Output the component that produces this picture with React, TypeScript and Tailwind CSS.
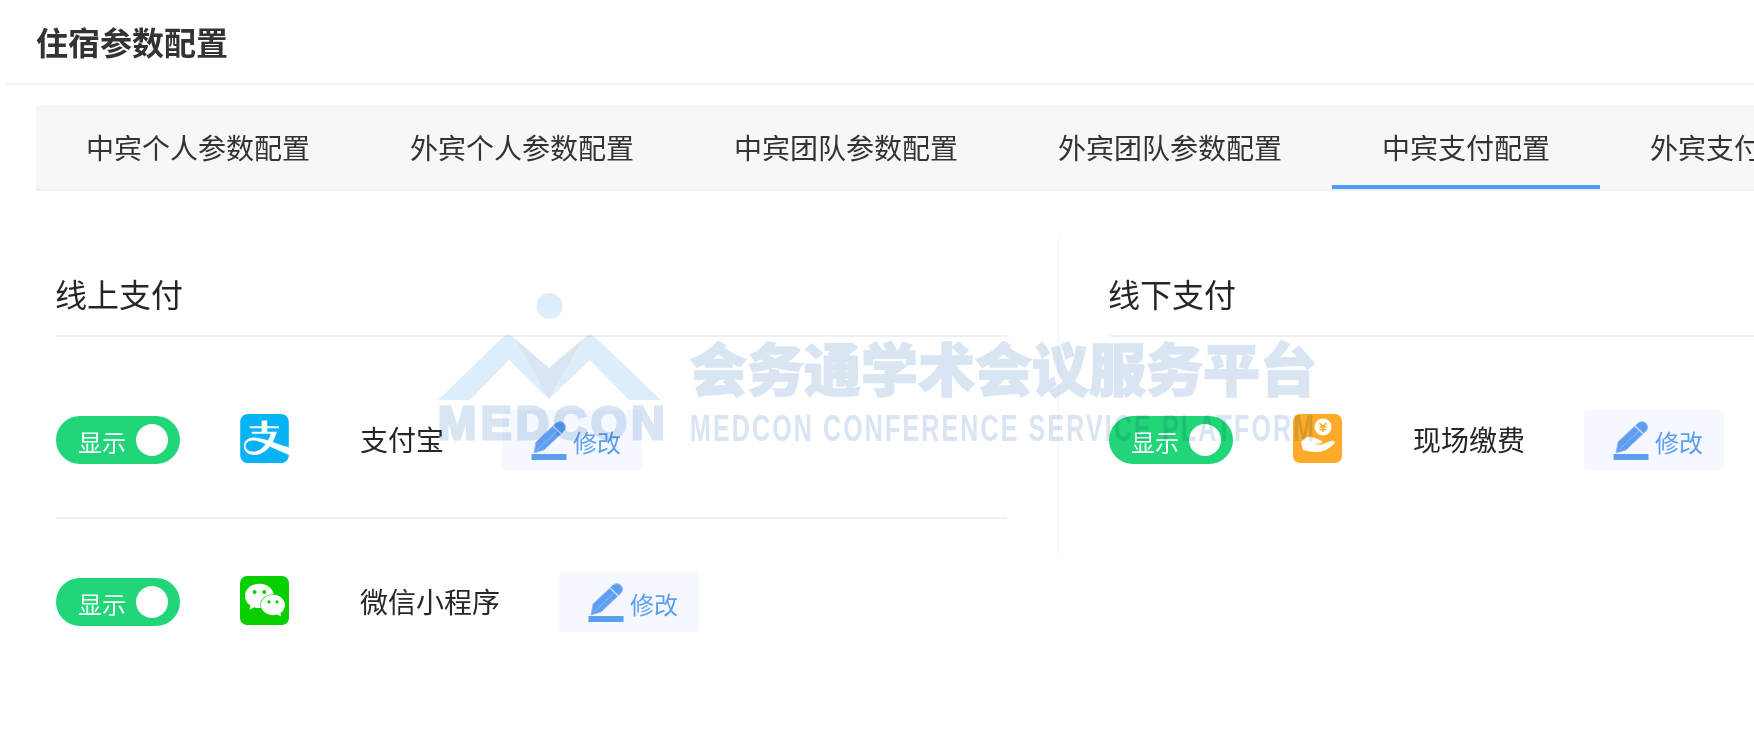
import React from 'react';
import { SiAlipay, SiWechat } from 'react-icons/si';

const cjk = 'font-["Microsoft_YaHei","Noto_Sans_CJK_SC",sans-serif]';

const tabs = ['中宾个人参数配置', '外宾个人参数配置', '中宾团队参数配置', '外宾团队参数配置', '中宾支付配置', '外宾支付配置'];

const Toggle = () => (
    <div className="flex items-center w-[124px] h-[48px] rounded-full bg-[#20d679] pl-[22px] shrink-0">
        <span className="text-[24px] leading-[48px] text-white w-[58px] pt-[3px]">显示</span>
        <span className="w-[32px] h-[32px] rounded-full bg-white" />
    </div>
);

const PencilIcon = () => (
    <svg width="36" height="40" viewBox="0 0 36 40" className="shrink-0">
        <path d="M3 33 L5 22 L24 4 C27 1 31 1 33 3.5 C35.5 6 35 9.5 32 12 L13 30 Z" fill="#5c9ff0" stroke="#a9b8f5" strokeWidth="1" />
        <path d="M22 6 L30.5 14" stroke="#c9dcfa" strokeWidth="1.5" />
        <path d="M6 30 L26 11" stroke="#8fbcf5" strokeWidth="1" />
        <rect x="0.5" y="34" width="35" height="6" fill="#5c9ff0" />
    </svg>
);

const EditButton = ({ className }: { className: string }) => (
    <button className={`flex items-center w-[140px] h-[60px] pl-[29px] rounded-[4px] bg-[#f5f9ff] shrink-0 ${className}`}>
        <PencilIcon />
        <span className="text-[24px] text-[#5c9ff0] ml-[6px] pt-[3px]">修改</span>
    </button>
);

const HandIcon = () => (
    <div className="w-[49px] h-[49px] ml-[60px] rounded-[7px] bg-[#ffaa2a] shrink-0 flex items-center justify-center relative -top-[2px]">
        <svg width="49" height="49" viewBox="0 0 49 49">
            <circle cx="30" cy="13" r="8.5" fill="#fff" />
            <path d="M26.5 9 L30 12.5 L33.5 9 M30 12.5 V18 M26.5 13 H33.5 M26.5 15.5 H33.5" stroke="#ffaa2a" strokeWidth="1.6" fill="none" />
            <path d="M8 28 C11 24 15 22 19 23 L27 26 C30 27 29 30 26 29.5 L21 29 L27 31 L38 27 C41 26 43 28 41 30 C36 35 30 38 24 38 C19 38 14 37 10 36 Z" fill="#fff" />
        </svg>
    </div>
);

const PayRow = ({ icon, name, editClass }: { icon: React.ReactNode; name: string; editClass: string }) => (
    <div className="flex items-center h-[60px]">
        <Toggle />
        {icon}
        <span className="ml-[71px] pb-[3px] text-[28px] text-[#262626] whitespace-nowrap">{name}</span>
        <EditButton className={editClass} />
    </div>
);

const AlipayLogo = () => (
    <div className="w-[49px] h-[49px] ml-[60px] shrink-0 relative -top-[2px]">
        <SiAlipay size={49} color="#06b4f5" />
    </div>
);

const WechatLogo = () => (
    <div className="w-[49px] h-[49px] ml-[60px] rounded-[7px] bg-[#09ce00] shrink-0 flex items-center justify-center relative -top-[2px]">
        <SiWechat size={40} color="#ffffff" />
    </div>
);

// semi-transparent platform watermark lying over the page
const Watermark = () => (
    <div className="absolute left-[438px] top-[293px] flex items-start pointer-events-none mix-blend-multiply">
        <div className="w-[230px] flex flex-col">
            <svg width="230" height="110" viewBox="438 293 230 110">
                <circle cx="549.5" cy="306" r="13" fill="#ddeefa" />
                <path d="M438 400 L502 338 Q508 332 514 338 L549 399 L509 360 L470 400 Z" fill="#ddeefa" />
                <path d="M661 400 L596 338 Q590 332 584 338 L549 399 L590 360 L629 400 Z" fill="#ddeefa" />
                <path d="M514 338 L549 368 L584 338 L549 399 Z" fill="#d9e5f2" />
            </svg>
            <span className='font-["Liberation_Sans",sans-serif] font-bold text-[46px] leading-[40px] tracking-[4.4px] text-[#d9e5f2] [-webkit-text-stroke:3px_#d9e5f2] whitespace-nowrap'>MEDCON</span>
        </div>
        <div className="ml-[22px] mt-[40px] flex flex-col">
            <span className={`${cjk} font-black text-[57px] leading-[66px] text-[#d9e5f2] [-webkit-text-stroke:1.5px_#d9e5f2] whitespace-nowrap`}>会务通学术会议服务平台</span>
            <span className='mt-[11px] w-[625px] origin-left scale-x-[0.675] font-["Liberation_Sans",sans-serif] font-bold text-[37px] leading-[38px] tracking-[3.2px] text-[#d9e5f2] whitespace-nowrap'>MEDCON CONFERENCE SERVICE PLATFORM</span>
        </div>
    </div>
);

export default function App() {
    return (
        <div className={`${cjk} relative w-full h-[735px] overflow-hidden bg-white text-[#333]`}>
            {/* Header */}
            <div className="ml-[6px] h-[85px] pl-[30px] border-b-2 border-[#f5f5f5] flex items-center">
                <h1 className="text-[32px] font-bold text-[#333] -mt-[2px]">住宿参数配置</h1>
            </div>

            {/* Tabs */}
            <div className="ml-[36px] mt-[20px] h-[86px] bg-[#f7f7f7] border-b-2 border-[#f0f0f0] flex">
                {tabs.map((tab, i) => (
                    <div
                        key={tab}
                        className={`relative h-[84px] px-[50px] pt-[4px] flex items-center shrink-0 whitespace-nowrap text-[28px] text-[#333] ${i === 4 ? 'border-b-4 border-[#4b9df7]' : 'border-b-4 border-transparent'}`}
                    >
                        {tab}
                    </div>
                ))}
            </div>

            {/* Content */}
            <div className="ml-[37px] mt-[44px] flex items-start">
                <div className="w-[1021px] pl-[19px] pr-[51px] shrink-0">
                    <div className="h-[102px] pt-[30px] border-b-2 border-[#f0f0f0] text-[32px] leading-[56px] text-[#262626] -indent-px">线上支付</div>
                    <div className="pt-[73px] pb-[47px] border-b-2 border-[#f0f0f0]">
                        <PayRow icon={<AlipayLogo />} name="支付宝" editClass="ml-[58px]" />
                    </div>
                    <div className="pt-[53px]">
                        <PayRow icon={<WechatLogo />} name="微信小程序" editClass="ml-[59px]" />
                    </div>
                </div>
                <div className="h-[321px] flex-1 pl-[50px] border-l border-[#f5f5f5]">
                    <div className="h-[102px] pt-[30px] border-b-2 border-[#f0f0f0] text-[32px] leading-[56px] text-[#262626] -indent-px">线下支付</div>
                    <div className="pt-[73px]">
                        <PayRow icon={<HandIcon />} name="现场缴费" editClass="ml-[59px]" />
                    </div>
                </div>
            </div>

            <Watermark />
        </div>
    );
}
